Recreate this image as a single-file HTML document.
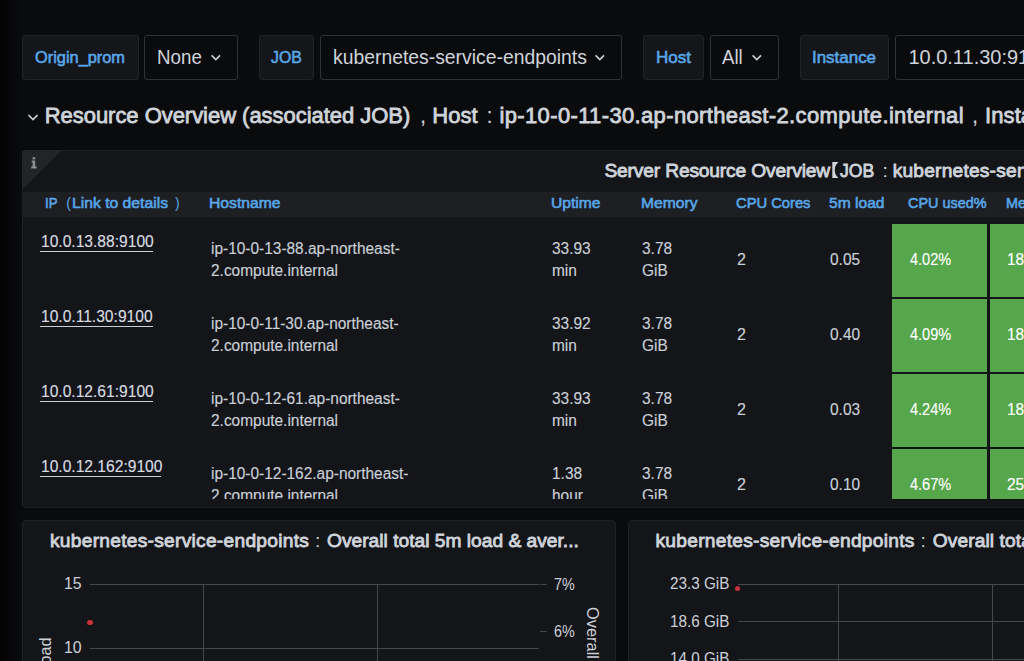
<!DOCTYPE html>
<html><head><meta charset="utf-8"><style>
html,body{margin:0;padding:0;}
body{width:1024px;height:661px;overflow:hidden;position:relative;background:#0a0b0d;font-family:"Liberation Sans",sans-serif;}
.t{position:absolute;line-height:1;white-space:pre;transform-origin:0 0;}
</style></head><body>
<div style="position:absolute;left:0px;top:0px;width:22px;height:661px;background:linear-gradient(to right,#030304,#0a0b0d);"></div>
<div style="position:absolute;left:22px;top:35px;width:116.5px;height:45px;background:#15161a;border:1px solid #212328;border-radius:3px;box-sizing:border-box;"></div>
<div class="t" style="left:34.70px;top:48.91px;font-size:17px;color:#58a6e7;-webkit-text-stroke:0.6px #58a6e7;transform:scaleX(0.9621);">Origin_prom</div>
<div style="position:absolute;left:144px;top:35px;width:93.5px;height:45px;border:1px solid #2f3237;border-radius:3px;box-sizing:border-box;"></div>
<div class="t" style="left:156.80px;top:47.37px;font-size:20px;color:#cfd4da;transform:scaleX(0.9372);">None</div>
<svg style="position:absolute;left:209.5px;top:52px" width="12" height="10" viewBox="0 0 12 10"><path d="M1.6 3.4 L5.8 7.6 L10 3.4" stroke="#cfd4da" stroke-width="1.6" fill="none"/></svg>
<div style="position:absolute;left:259px;top:35px;width:54.5px;height:45px;background:#15161a;border:1px solid #212328;border-radius:3px;box-sizing:border-box;"></div>
<div class="t" style="left:270.70px;top:48.91px;font-size:17px;color:#58a6e7;-webkit-text-stroke:0.6px #58a6e7;transform:scaleX(0.9289);">JOB</div>
<div style="position:absolute;left:320px;top:35px;width:301.5px;height:45px;border:1px solid #2f3237;border-radius:3px;box-sizing:border-box;"></div>
<div class="t" style="left:332.90px;top:47.37px;font-size:20px;color:#cfd4da;transform:scaleX(0.9674);">kubernetes-service-endpoints</div>
<svg style="position:absolute;left:593.5px;top:52px" width="12" height="10" viewBox="0 0 12 10"><path d="M1.6 3.4 L5.8 7.6 L10 3.4" stroke="#cfd4da" stroke-width="1.6" fill="none"/></svg>
<div style="position:absolute;left:643px;top:35px;width:61px;height:45px;background:#15161a;border:1px solid #212328;border-radius:3px;box-sizing:border-box;"></div>
<div class="t" style="left:656.40px;top:48.91px;font-size:17px;color:#58a6e7;-webkit-text-stroke:0.6px #58a6e7;transform:scaleX(0.9986);">Host</div>
<div style="position:absolute;left:710px;top:35px;width:69px;height:45px;border:1px solid #2f3237;border-radius:3px;box-sizing:border-box;"></div>
<div class="t" style="left:722.30px;top:47.37px;font-size:20px;color:#cfd4da;transform:scaleX(0.9303);">All</div>
<svg style="position:absolute;left:751.3px;top:52px" width="12" height="10" viewBox="0 0 12 10"><path d="M1.6 3.4 L5.8 7.6 L10 3.4" stroke="#cfd4da" stroke-width="1.6" fill="none"/></svg>
<div style="position:absolute;left:800px;top:35px;width:89px;height:45px;background:#15161a;border:1px solid #212328;border-radius:3px;box-sizing:border-box;"></div>
<div class="t" style="left:812.40px;top:48.91px;font-size:17px;color:#58a6e7;-webkit-text-stroke:0.6px #58a6e7;transform:scaleX(0.9961);">Instance</div>
<div style="position:absolute;left:895px;top:35px;width:200px;height:45px;border:1px solid #2f3237;border-radius:3px;box-sizing:border-box;"></div>
<div class="t" style="left:908.40px;top:47.37px;font-size:20px;color:#cfd4da;">10.0.11.30:9100</div>
<svg style="position:absolute;left:27px;top:113px" width="12" height="9" viewBox="0 0 12 9"><path d="M1.5 2 L6 6.5 L10.5 2" stroke="#cfd4da" stroke-width="1.6" fill="none"/></svg>
<div class="t" style="left:44.70px;top:105.18px;font-size:22px;color:#cfd4da;-webkit-text-stroke:0.8px #cfd4da;letter-spacing:-0.036px;">Resource Overview (associated JOB)</div>
<div class="t" style="left:420.00px;top:105.18px;font-size:22px;color:#cfd4da;">,</div>
<div class="t" style="left:432.30px;top:105.18px;font-size:22px;color:#cfd4da;-webkit-text-stroke:0.8px #cfd4da;letter-spacing:0.050px;">Host</div>
<div class="t" style="left:486.50px;top:105.18px;font-size:22px;color:#cfd4da;">:</div>
<div class="t" style="left:499.50px;top:105.18px;font-size:22px;color:#cfd4da;-webkit-text-stroke:0.8px #cfd4da;letter-spacing:0.355px;">ip-10-0-11-30.ap-northeast-2.compute.internal</div>
<div class="t" style="left:972.00px;top:105.18px;font-size:22px;color:#cfd4da;">,</div>
<div class="t" style="left:985.00px;top:105.18px;font-size:22px;color:#cfd4da;-webkit-text-stroke:0.8px #cfd4da;letter-spacing:0.1px;">Instance</div>
<div style="position:absolute;left:22px;top:149.5px;width:1100px;height:358.5px;background:#141519;border:1px solid #1e2024;border-radius:4px;box-sizing:border-box;"></div>
<svg style="position:absolute;left:22px;top:149.5px" width="41" height="41"><path d="M3 0 L40 0 L0 40 L0 3 Q0 0 3 0Z" fill="#232428"/></svg>
<svg style="position:absolute;left:30px;top:156px" width="8" height="14" viewBox="0 0 8 14"><rect x="2.6" y="1.2" width="2.6" height="2.2" fill="#8c8e93"/><path d="M1.6 4.6 H5.2 V10.6 H6.6 V12.6 H1.2 V10.6 H2.6 V6.2 H1.6Z" fill="#8c8e93"/></svg>
<div class="t" style="left:604.40px;top:160.75px;font-size:19.2px;color:#cfd4da;-webkit-text-stroke:0.85px #cfd4da;letter-spacing:-0.152px;">Server Resource Overview</div>
<svg style="position:absolute;left:832px;top:162px" width="7" height="16" viewBox="0 0 7 16"><path d="M0.3 0 H6.5 C3.6 2.6 2.8 5 2.8 8 C2.8 11 3.6 13.4 6.5 16 H0.3Z" fill="#cfd4da"/></svg>
<div class="t" style="left:839.90px;top:160.75px;font-size:19.2px;color:#cfd4da;-webkit-text-stroke:0.85px #cfd4da;transform:scaleX(0.9183);">JOB</div>
<div class="t" style="left:882.50px;top:160.75px;font-size:19.2px;color:#cfd4da;">:</div>
<div class="t" style="left:892.70px;top:160.75px;font-size:19.2px;color:#cfd4da;-webkit-text-stroke:0.85px #cfd4da;letter-spacing:0.2px;">kubernetes-service-endpoints</div>
<div style="position:absolute;left:23px;top:191.5px;width:1001px;height:25.7px;background:#1e1f23;"></div>
<div class="t" style="left:44.60px;top:195.38px;font-size:15.5px;color:#58a6e7;-webkit-text-stroke:0.6px #58a6e7;transform:scaleX(0.8464);">IP</div>
<div class="t" style="left:66.30px;top:196.35px;font-size:14px;color:#58a6e7;">(</div>
<div class="t" style="left:72.40px;top:195.38px;font-size:15.5px;color:#58a6e7;-webkit-text-stroke:0.6px #58a6e7;transform:scaleX(1.0127);">Link to details</div>
<div class="t" style="left:175.00px;top:196.35px;font-size:14px;color:#58a6e7;">)</div>
<div class="t" style="left:209.00px;top:195.38px;font-size:15.5px;color:#58a6e7;-webkit-text-stroke:0.6px #58a6e7;transform:scaleX(1.0120);">Hostname</div>
<div class="t" style="left:550.50px;top:195.38px;font-size:15.5px;color:#58a6e7;-webkit-text-stroke:0.6px #58a6e7;transform:scaleX(1.0081);">Uptime</div>
<div class="t" style="left:641.00px;top:195.38px;font-size:15.5px;color:#58a6e7;-webkit-text-stroke:0.6px #58a6e7;transform:scaleX(1.0089);">Memory</div>
<div class="t" style="left:735.50px;top:195.38px;font-size:15.5px;color:#58a6e7;-webkit-text-stroke:0.6px #58a6e7;transform:scaleX(0.9503);">CPU Cores</div>
<div class="t" style="left:829.00px;top:195.38px;font-size:15.5px;color:#58a6e7;-webkit-text-stroke:0.6px #58a6e7;transform:scaleX(1.0063);">5m load</div>
<div class="t" style="left:908.30px;top:195.38px;font-size:15.5px;color:#58a6e7;-webkit-text-stroke:0.6px #58a6e7;transform:scaleX(0.9307);">CPU used%</div>
<div class="t" style="left:1005.70px;top:195.38px;font-size:15.5px;color:#58a6e7;-webkit-text-stroke:0.6px #58a6e7;transform:scaleX(0.93);transform-origin:0 0;">Memory used%</div>
<div style="position:absolute;left:0;top:217px;width:1024px;height:281.5px;overflow:hidden;">
<div style="position:absolute;left:892px;top:7px;width:95px;height:73px;background:#56a64b;"></div>
<div style="position:absolute;left:989.5px;top:7px;width:60px;height:73px;background:#56a64b;"></div>
<div class="t" style="left:41.10px;top:17.06px;font-size:16px;color:#d8dce1;-webkit-text-stroke:0.15px #d8dce1;transform:scaleX(0.9746);">10.0.13.88:9100</div>
<div style="position:absolute;left:40px;top:34.0px;width:112.5px;height:1.2px;background:#c9d0d7;"></div>
<div class="t" style="left:210.90px;top:23.56px;font-size:16px;color:#c9d0d7;-webkit-text-stroke:0.15px #c9d0d7;transform:scaleX(0.9650);">ip-10-0-13-88.ap-northeast-</div>
<div class="t" style="left:210.90px;top:45.66px;font-size:16px;color:#c9d0d7;-webkit-text-stroke:0.15px #c9d0d7;transform:scaleX(0.9650);">2.compute.internal</div>
<div class="t" style="left:551.90px;top:23.76px;font-size:16px;color:#c9d0d7;-webkit-text-stroke:0.15px #c9d0d7;transform:scaleX(0.9650);">33.93</div>
<div class="t" style="left:551.90px;top:45.76px;font-size:16px;color:#c9d0d7;-webkit-text-stroke:0.15px #c9d0d7;transform:scaleX(0.9650);">min</div>
<div class="t" style="left:642.20px;top:23.76px;font-size:16px;color:#c9d0d7;-webkit-text-stroke:0.15px #c9d0d7;transform:scaleX(0.9650);">3.78</div>
<div class="t" style="left:642.20px;top:45.76px;font-size:16px;color:#c9d0d7;-webkit-text-stroke:0.15px #c9d0d7;transform:scaleX(0.9650);">GiB</div>
<div class="t" style="left:736.90px;top:35.16px;font-size:16px;color:#c9d0d7;-webkit-text-stroke:0.15px #c9d0d7;">2</div>
<div class="t" style="left:830.00px;top:35.16px;font-size:16px;color:#c9d0d7;-webkit-text-stroke:0.15px #c9d0d7;transform:scaleX(0.9650);">0.05</div>
<div class="t" style="left:909.50px;top:34.96px;font-size:16px;color:#ffffff;-webkit-text-stroke:0.15px #ffffff;transform:scaleX(0.9085);">4.02%</div>
<div class="t" style="left:1007.30px;top:34.96px;font-size:16px;color:#ffffff;-webkit-text-stroke:0.15px #ffffff;transform:scaleX(0.9650);">18.49%</div>
<div style="position:absolute;left:892px;top:82px;width:95px;height:73px;background:#56a64b;"></div>
<div style="position:absolute;left:989.5px;top:82px;width:60px;height:73px;background:#56a64b;"></div>
<div class="t" style="left:41.10px;top:92.06px;font-size:16px;color:#d8dce1;-webkit-text-stroke:0.15px #d8dce1;transform:scaleX(0.9746);">10.0.11.30:9100</div>
<div style="position:absolute;left:40px;top:109.0px;width:112.5px;height:1.2px;background:#c9d0d7;"></div>
<div class="t" style="left:210.90px;top:98.56px;font-size:16px;color:#c9d0d7;-webkit-text-stroke:0.15px #c9d0d7;transform:scaleX(0.9650);">ip-10-0-11-30.ap-northeast-</div>
<div class="t" style="left:210.90px;top:120.66px;font-size:16px;color:#c9d0d7;-webkit-text-stroke:0.15px #c9d0d7;transform:scaleX(0.9650);">2.compute.internal</div>
<div class="t" style="left:551.90px;top:98.76px;font-size:16px;color:#c9d0d7;-webkit-text-stroke:0.15px #c9d0d7;transform:scaleX(0.9650);">33.92</div>
<div class="t" style="left:551.90px;top:120.76px;font-size:16px;color:#c9d0d7;-webkit-text-stroke:0.15px #c9d0d7;transform:scaleX(0.9650);">min</div>
<div class="t" style="left:642.20px;top:98.76px;font-size:16px;color:#c9d0d7;-webkit-text-stroke:0.15px #c9d0d7;transform:scaleX(0.9650);">3.78</div>
<div class="t" style="left:642.20px;top:120.76px;font-size:16px;color:#c9d0d7;-webkit-text-stroke:0.15px #c9d0d7;transform:scaleX(0.9650);">GiB</div>
<div class="t" style="left:736.90px;top:110.16px;font-size:16px;color:#c9d0d7;-webkit-text-stroke:0.15px #c9d0d7;">2</div>
<div class="t" style="left:830.00px;top:110.16px;font-size:16px;color:#c9d0d7;-webkit-text-stroke:0.15px #c9d0d7;transform:scaleX(0.9650);">0.40</div>
<div class="t" style="left:909.50px;top:109.96px;font-size:16px;color:#ffffff;-webkit-text-stroke:0.15px #ffffff;transform:scaleX(0.9085);">4.09%</div>
<div class="t" style="left:1007.30px;top:109.96px;font-size:16px;color:#ffffff;-webkit-text-stroke:0.15px #ffffff;transform:scaleX(0.9650);">18.70%</div>
<div style="position:absolute;left:892px;top:157px;width:95px;height:73px;background:#56a64b;"></div>
<div style="position:absolute;left:989.5px;top:157px;width:60px;height:73px;background:#56a64b;"></div>
<div class="t" style="left:41.10px;top:167.06px;font-size:16px;color:#d8dce1;-webkit-text-stroke:0.15px #d8dce1;transform:scaleX(0.9746);">10.0.12.61:9100</div>
<div style="position:absolute;left:40px;top:184.0px;width:112.5px;height:1.2px;background:#c9d0d7;"></div>
<div class="t" style="left:210.90px;top:173.56px;font-size:16px;color:#c9d0d7;-webkit-text-stroke:0.15px #c9d0d7;transform:scaleX(0.9650);">ip-10-0-12-61.ap-northeast-</div>
<div class="t" style="left:210.90px;top:195.66px;font-size:16px;color:#c9d0d7;-webkit-text-stroke:0.15px #c9d0d7;transform:scaleX(0.9650);">2.compute.internal</div>
<div class="t" style="left:551.90px;top:173.76px;font-size:16px;color:#c9d0d7;-webkit-text-stroke:0.15px #c9d0d7;transform:scaleX(0.9650);">33.93</div>
<div class="t" style="left:551.90px;top:195.76px;font-size:16px;color:#c9d0d7;-webkit-text-stroke:0.15px #c9d0d7;transform:scaleX(0.9650);">min</div>
<div class="t" style="left:642.20px;top:173.76px;font-size:16px;color:#c9d0d7;-webkit-text-stroke:0.15px #c9d0d7;transform:scaleX(0.9650);">3.78</div>
<div class="t" style="left:642.20px;top:195.76px;font-size:16px;color:#c9d0d7;-webkit-text-stroke:0.15px #c9d0d7;transform:scaleX(0.9650);">GiB</div>
<div class="t" style="left:736.90px;top:185.16px;font-size:16px;color:#c9d0d7;-webkit-text-stroke:0.15px #c9d0d7;">2</div>
<div class="t" style="left:830.00px;top:185.16px;font-size:16px;color:#c9d0d7;-webkit-text-stroke:0.15px #c9d0d7;transform:scaleX(0.9650);">0.03</div>
<div class="t" style="left:909.50px;top:184.96px;font-size:16px;color:#ffffff;-webkit-text-stroke:0.15px #ffffff;transform:scaleX(0.9085);">4.24%</div>
<div class="t" style="left:1007.30px;top:184.96px;font-size:16px;color:#ffffff;-webkit-text-stroke:0.15px #ffffff;transform:scaleX(0.9650);">18.12%</div>
<div style="position:absolute;left:892px;top:232px;width:95px;height:73px;background:#56a64b;"></div>
<div style="position:absolute;left:989.5px;top:232px;width:60px;height:73px;background:#56a64b;"></div>
<div class="t" style="left:41.10px;top:242.06px;font-size:16px;color:#d8dce1;-webkit-text-stroke:0.15px #d8dce1;transform:scaleX(0.9747);">10.0.12.162:9100</div>
<div style="position:absolute;left:40px;top:259.0px;width:121px;height:1.2px;background:#c9d0d7;"></div>
<div class="t" style="left:210.90px;top:248.56px;font-size:16px;color:#c9d0d7;-webkit-text-stroke:0.15px #c9d0d7;transform:scaleX(0.9650);">ip-10-0-12-162.ap-northeast-</div>
<div class="t" style="left:210.90px;top:270.66px;font-size:16px;color:#c9d0d7;-webkit-text-stroke:0.15px #c9d0d7;transform:scaleX(0.9650);">2.compute.internal</div>
<div class="t" style="left:551.90px;top:248.76px;font-size:16px;color:#c9d0d7;-webkit-text-stroke:0.15px #c9d0d7;transform:scaleX(0.9650);">1.38</div>
<div class="t" style="left:551.90px;top:270.76px;font-size:16px;color:#c9d0d7;-webkit-text-stroke:0.15px #c9d0d7;transform:scaleX(0.9650);">hour</div>
<div class="t" style="left:642.20px;top:248.76px;font-size:16px;color:#c9d0d7;-webkit-text-stroke:0.15px #c9d0d7;transform:scaleX(0.9650);">3.78</div>
<div class="t" style="left:642.20px;top:270.76px;font-size:16px;color:#c9d0d7;-webkit-text-stroke:0.15px #c9d0d7;transform:scaleX(0.9650);">GiB</div>
<div class="t" style="left:736.90px;top:260.16px;font-size:16px;color:#c9d0d7;-webkit-text-stroke:0.15px #c9d0d7;">2</div>
<div class="t" style="left:830.00px;top:260.16px;font-size:16px;color:#c9d0d7;-webkit-text-stroke:0.15px #c9d0d7;transform:scaleX(0.9650);">0.10</div>
<div class="t" style="left:909.50px;top:259.96px;font-size:16px;color:#ffffff;-webkit-text-stroke:0.15px #ffffff;transform:scaleX(0.9085);">4.67%</div>
<div class="t" style="left:1007.30px;top:259.96px;font-size:16px;color:#ffffff;-webkit-text-stroke:0.15px #ffffff;transform:scaleX(0.9650);">25.31%</div>
</div>
<div style="position:absolute;left:22px;top:520px;width:594px;height:200px;background:#141519;border:1px solid #1e2024;border-radius:4px;box-sizing:border-box;"></div>
<div style="position:absolute;left:627.5px;top:520px;width:500px;height:200px;background:#141519;border:1px solid #1e2024;border-radius:4px;box-sizing:border-box;"></div>
<div class="t" style="left:50.00px;top:530.95px;font-size:19.2px;color:#cfd4da;-webkit-text-stroke:0.85px #cfd4da;letter-spacing:0.265px;">kubernetes-service-endpoints</div>
<div class="t" style="left:315.00px;top:530.95px;font-size:19.2px;color:#cfd4da;">:</div>
<div class="t" style="left:327.00px;top:530.95px;font-size:19.2px;color:#cfd4da;-webkit-text-stroke:0.85px #cfd4da;letter-spacing:0.005px;">Overall total 5m load &amp; aver...</div>
<div class="t" style="left:655.50px;top:530.95px;font-size:19.2px;color:#cfd4da;-webkit-text-stroke:0.85px #cfd4da;letter-spacing:0.265px;">kubernetes-service-endpoints</div>
<div class="t" style="left:920.50px;top:530.95px;font-size:19.2px;color:#cfd4da;">:</div>
<div class="t" style="left:932.70px;top:530.95px;font-size:19.2px;color:#cfd4da;-webkit-text-stroke:0.85px #cfd4da;letter-spacing:0.1px;">Overall total 5m load</div>
<div style="position:absolute;left:90px;top:583.8px;width:448.5px;height:1px;background:#46474b;"></div>
<div style="position:absolute;left:90px;top:647.8px;width:448.5px;height:1px;background:#46474b;"></div>
<div style="position:absolute;left:203.0px;top:584px;width:1px;height:100px;background:#46474b;"></div>
<div style="position:absolute;left:376.8px;top:584px;width:1px;height:100px;background:#46474b;"></div>
<div style="position:absolute;left:539.5px;top:583.5px;width:7px;height:1px;background:#46474b;"></div>
<div style="position:absolute;left:539.5px;top:631.3px;width:7px;height:1px;background:#46474b;"></div>
<div class="t" style="left:63.70px;top:575.29px;font-size:16.2px;color:#ccd1d7;transform:scaleX(0.9778);">15</div>
<div class="t" style="left:63.70px;top:639.29px;font-size:16.2px;color:#ccd1d7;transform:scaleX(0.9778);">10</div>
<div class="t" style="left:554.00px;top:575.79px;font-size:16.2px;color:#ccd1d7;transform:scaleX(0.8846);">7%</div>
<div class="t" style="left:554.00px;top:623.29px;font-size:16.2px;color:#ccd1d7;transform:scaleX(0.8846);">6%</div>
<div style="position:absolute;left:87.3px;top:619.5px;width:5.4px;height:5.4px;background:#c9303b;border-radius:50%;"></div>
<div class="t" style="left:587.3px;top:607px;font-size:16.4px;color:#ccd1d7;transform-origin:0 0;transform:translate(14px,0) rotate(90deg);">Overall</div>
<div class="t" style="left:37px;top:695px;font-size:16.2px;color:#ccd1d7;transform-origin:0 0;transform:translate(0,0) rotate(-90deg);">5m load</div>
<div style="position:absolute;left:737.5px;top:583.8px;width:290px;height:1px;background:#46474b;"></div>
<div style="position:absolute;left:737.5px;top:621.3px;width:290px;height:1px;background:#46474b;"></div>
<div style="position:absolute;left:737.5px;top:659.0px;width:290px;height:1px;background:#46474b;"></div>
<div style="position:absolute;left:838.2px;top:584.3px;width:1px;height:100px;background:#46474b;"></div>
<div style="position:absolute;left:992.3px;top:584.3px;width:1px;height:100px;background:#46474b;"></div>
<div class="t" style="left:669.80px;top:575.29px;font-size:16.2px;color:#ccd1d7;transform:scaleX(0.9437);">23.3 GiB</div>
<div class="t" style="left:669.80px;top:612.89px;font-size:16.2px;color:#ccd1d7;transform:scaleX(0.9437);">18.6 GiB</div>
<div class="t" style="left:669.80px;top:650.49px;font-size:16.2px;color:#ccd1d7;transform:scaleX(0.9437);">14.0 GiB</div>
<div style="position:absolute;left:734.8px;top:585.9px;width:5.4px;height:5.4px;background:#c9303b;border-radius:50%;"></div>
</body></html>
